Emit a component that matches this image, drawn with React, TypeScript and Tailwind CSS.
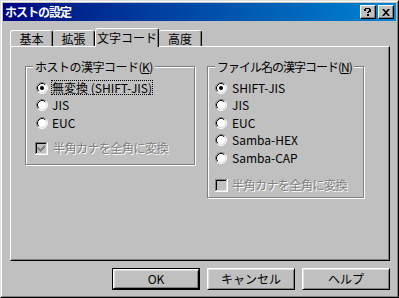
import React from "react";

const face = "font-['Noto_Sans_CJK_JP','Noto_Sans_CJK_SC',sans-serif]";

function Radio({ checked }: { checked?: boolean }) {
	return (
		<svg width="12" height="12" viewBox="0 0 12 12" className="shrink-0">
			<circle cx="6" cy="6" r="5" fill="#fff" />
			<path d="M2.11 9.89A5.5 5.5 0 0 1 9.89 2.11" fill="none" stroke="#808080" />
			<path d="M9.89 2.11A5.5 5.5 0 0 1 2.11 9.89" fill="none" stroke="#fff" />
			<path d="M2.82 9.18A4.5 4.5 0 0 1 9.18 2.82" fill="none" stroke="#000" />
			<path d="M9.18 2.82A4.5 4.5 0 0 1 2.82 9.18" fill="none" stroke="#dfdfdf" />
			{checked && <circle cx="6" cy="6" r="2" fill="#000" />}
		</svg>
	);
}

function Check({ checked }: { checked?: boolean }) {
	return (
		<svg width="13" height="13" viewBox="0 0 13 13" className="shrink-0">
			<rect x="0" y="0" width="13" height="13" fill="#fff" />
			<rect x="0" y="0" width="12" height="12" fill="#808080" />
			<rect x="1" y="1" width="11" height="11" fill="#dfdfdf" />
			<rect x="1" y="1" width="10" height="10" fill="#000" />
			<rect x="2" y="2" width="9" height="9" fill="#c0c0c0" />
			{checked && (
				<path d="M3 5h1v1h1v1h1v-1h1v-1h1v-1h1v-1h1v3h-1v1h-1v1h-1v1h-1v1h-1v-1h-1v-1h-1v-1h-1z" fill="#808080" />
			)}
		</svg>
	);
}

function Row({ children, className = "" }: { children: React.ReactNode; className?: string }) {
	return <div className={`flex h-[17.5px] items-center whitespace-nowrap ${className}`}>{children}</div>;
}

function Group({
	title,
	hotkey,
	className,
	legend,
	children,
}: {
	title: string;
	hotkey: string;
	className: string;
	legend: string;
	children: React.ReactNode;
}) {
	return (
		<div
			className={`flex flex-col border border-[#808080] shadow-[1px_1px_0_#fff,inset_1px_1px_0_#fff] ${className}`}
		>
			<span className={`-mt-[7px] ml-[7px] self-start whitespace-nowrap bg-[#c0c0c0] px-[2px] leading-[13px] ${legend}`}>
				{title}(<span className="underline">{hotkey}</span>)
			</span>
			{children}
		</div>
	);
}

const disabled = "tracking-[-0.5px] text-[#808080] [text-shadow:1px_1px_0_#fff]";

function Button({ label, primary }: { label: string; primary?: boolean }) {
	const inner = (
		<div className="flex h-full w-full items-center justify-center border-l border-t border-r border-b border-l-white border-t-white border-r-black border-b-black shadow-[inset_1px_1px_0_#dfdfdf,inset_-1px_-1px_0_#808080]">
			{label}
		</div>
	);
	if (primary) {
		return <div className="h-[22px] w-[88px] border border-black">{inner}</div>;
	}
	return <div className="h-[22px] w-[88px]">{inner}</div>;
}

export default function App() {
	return (
		<div className={`${face} h-[298px] w-[399px] bg-[#c0c0c0] text-[12px] text-black`}>
			<div className="h-full w-full border-l border-t border-r border-b border-l-[#dfdfdf] border-t-[#dfdfdf] border-r-black border-b-black">
				<div className="flex h-full w-full flex-col border-l border-t border-r border-b border-l-white border-t-white border-r-[#808080] border-b-[#808080] p-[1px]">
					{/* title bar */}
					<div className="flex h-[18px] items-center bg-gradient-to-r from-[#000080] to-[#1084d0] pl-[2px] pr-[2px]">
						<span className="flex-1 font-bold leading-[14px] tracking-[-1px] text-white">ホストの設定</span>
						<div className="flex gap-[2px]">
							<div className="flex h-[14px] w-[16px] items-center justify-center border-l border-t border-r border-b border-l-white border-t-white border-r-black border-b-black bg-[#c0c0c0] shadow-[inset_-1px_-1px_0_#808080]">
								<svg width="8" height="8" viewBox="0 0 8 8">
									<path d="M1 0h5v1h1v3h-2v1h-2v-1h1v-1h1v-2h-3v2h-2v-2h1z" fill="#000" />
									<rect x="3" y="6" width="2" height="2" fill="#000" />
								</svg>
							</div>
							<div className="flex h-[14px] w-[16px] items-center justify-center border-l border-t border-r border-b border-l-white border-t-white border-r-black border-b-black bg-[#c0c0c0] shadow-[inset_-1px_-1px_0_#808080]">
								<svg width="8" height="7" viewBox="0 0 8 7">
									<path d="M0 0h2l2 2.2L6 0h2L5 3.5 8 7H6L4 4.8 2 7H0l3-3.5z" fill="#000" />
								</svg>
							</div>
						</div>
					</div>

					<div className="ml-[7px] mt-[7px] flex w-[380px] flex-col">
						{/* tabs */}
						<div className="flex h-[18px] items-end">
							<div className="flex h-[16px] w-[43px] items-center justify-center rounded-t-[3px] border-l border-t border-r border-l-white border-t-white border-r-black shadow-[inset_-1px_0_0_#808080]">
								基本
							</div>
							<div className="flex h-[16px] w-[42px] items-center justify-center rounded-t-[3px] border-t border-r border-t-white border-r-black shadow-[inset_-1px_0_0_#808080]">
								拡張
							</div>
							<div className="relative z-10 -mb-[1px] flex h-[19px] w-[64px] items-center justify-center rounded-t-[3px] border-l border-t border-r border-l-white border-t-white border-r-black bg-[#c0c0c0] pb-[1px] shadow-[inset_-1px_0_0_#808080]">
								文字コード
							</div>
							<div className="flex h-[16px] w-[43px] items-center justify-center rounded-t-[3px] border-t border-r border-t-white border-r-black shadow-[inset_-1px_0_0_#808080]">
								高度
							</div>
						</div>

						{/* tab page */}
						<div className="flex h-[215px] items-start gap-[12px] border-l border-t border-r border-b border-l-white border-t-white border-r-black border-b-black pl-[14px] pt-[19px] shadow-[inset_-1px_-1px_0_#808080]">
							<Group
								title="ホストの漢字コード"
								hotkey="K"
								legend="tracking-[-0.5px]"
								className="h-[99px] w-[170px] shrink-0"
							>
								<div className="flex flex-col pl-[10px] pt-[6px]">
									<Row className="gap-[3px]">
										<Radio checked />
										<span className="border border-dotted border-black leading-[13px]">無変換 (SHIFT-JIS)</span>
									</Row>
									<Row className="gap-[4px]">
										<Radio />
										<span>JIS</span>
									</Row>
									<Row className="gap-[4px]">
										<Radio />
										<span>EUC</span>
									</Row>
									<Row className="-ml-[1px] mt-[8px] gap-[5px]">
										<Check checked />
										<span className={disabled}>半角カナを全角に変換</span>
									</Row>
								</div>
							</Group>

							<Group
								title="ファイル名の漢字コード"
								hotkey="N"
								legend="tracking-[-1px]"
								className="h-[132px] w-[157px] shrink-0"
							>
								<div className="flex flex-col pl-[7px] pt-[6px]">
									<Row className="gap-[5px]">
										<Radio checked />
										<span>SHIFT-JIS</span>
									</Row>
									<Row className="gap-[5px]">
										<Radio />
										<span>JIS</span>
									</Row>
									<Row className="gap-[5px]">
										<Radio />
										<span>EUC</span>
									</Row>
									<Row className="gap-[5px]">
										<Radio />
										<span>Samba-HEX</span>
									</Row>
									<Row className="gap-[5px]">
										<Radio />
										<span>Samba-CAP</span>
									</Row>
									<Row className="mt-[10px] gap-[4px]">
										<Check />
										<span className={disabled}>半角カナを全角に変換</span>
									</Row>
								</div>
							</Group>
						</div>

						{/* buttons */}
						<div className="mt-[7px] flex justify-end gap-[7px]">
							<Button label="OK" primary />
							<Button label="キャンセル" />
							<Button label="ヘルプ" />
						</div>
					</div>
				</div>
			</div>
		</div>
	);
}
